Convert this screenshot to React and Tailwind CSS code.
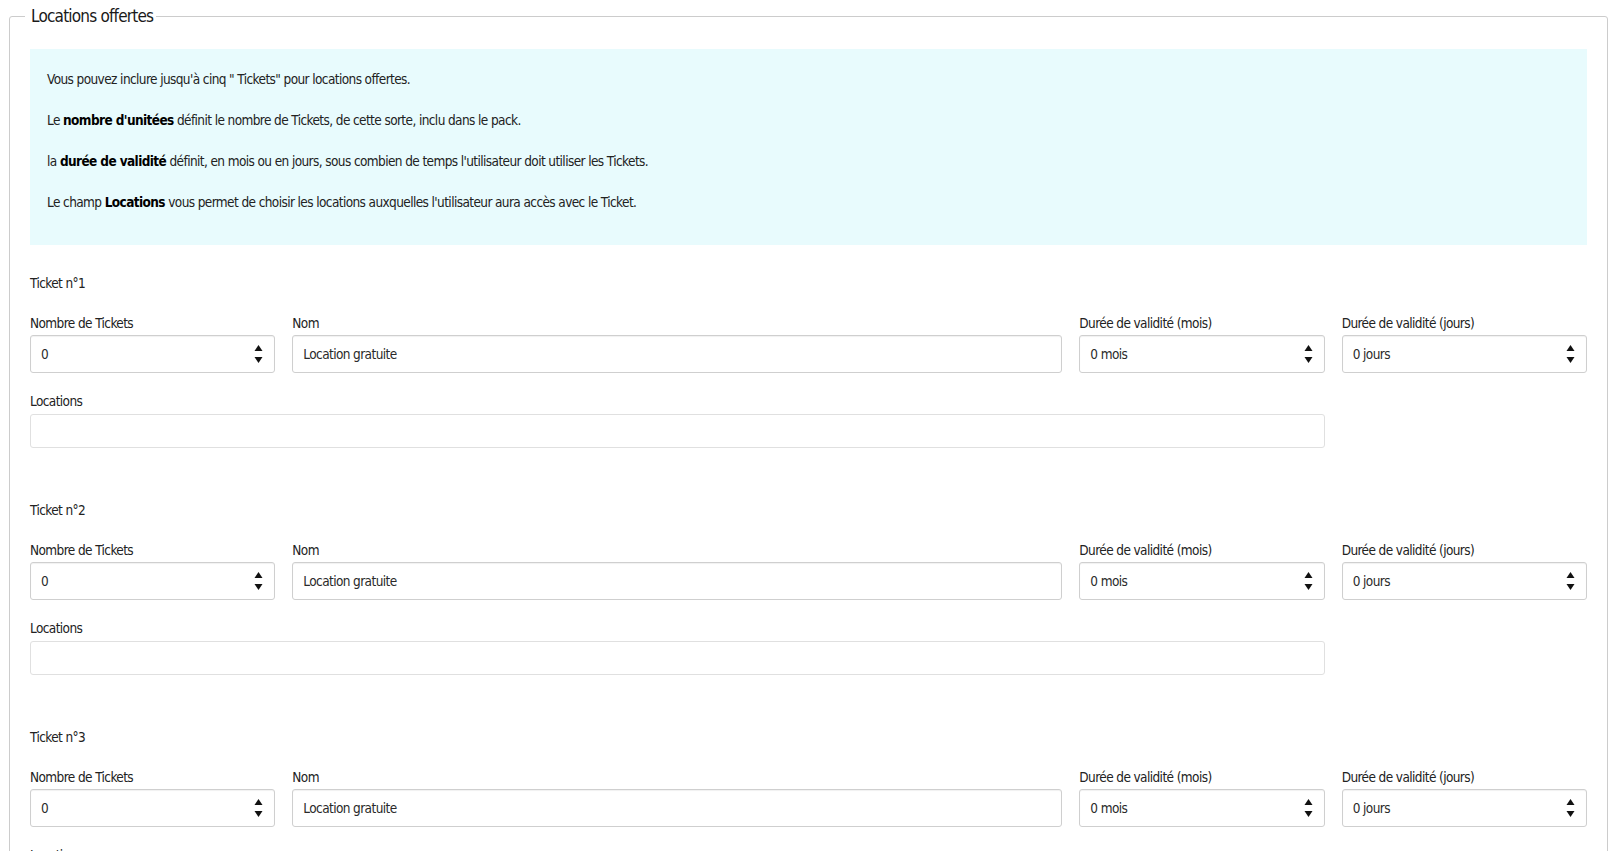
import React from 'react';

const FONT = "font-['Liberation_Sans_Narrow','DejaVu_Sans_Condensed','Roboto_Condensed','Liberation_Sans',sans-serif]";

function Spinner() {
  return (
    <svg className="w-[9px] h-[22px] shrink-0" viewBox="0 0 9 22" fill="#111">
      <path d="M4.5 2 L8.5 8 L0.5 8 Z" />
      <path d="M0.5 14 L8.5 14 L4.5 20 Z" />
    </svg>
  );
}

function Field({ label, value, spin, span }) {
  return (
    <div className={span}>
      <div className="h-5 leading-5">{label}</div>
      <div className="mt-[2px] h-[38px] border border-[#cfcfcf] rounded-[3px] bg-white shadow-[inset_0_1px_1px_rgba(0,0,0,0.06)] flex items-center pl-[10px] pr-[11px] text-[#2a2a2a]">
        <span className="flex-1 truncate">{value}</span>
        {spin && <Spinner />}
      </div>
    </div>
  );
}

function Ticket({ n }) {
  return (
    <div className="pb-[52px]">
      <div className="h-5 leading-5">Ticket n°{n}</div>
      <div className="grid grid-cols-12 gap-x-[17px] mt-5">
        <Field span="col-span-2" label="Nombre de Tickets" value="0" spin />
        <Field span="col-span-6" label="Nom" value="Location gratuite" />
        <Field span="col-span-2" label="Durée de validité (mois)" value="0 mois" spin />
        <Field span="col-span-2" label="Durée de validité (jours)" value="0 jours" spin />
        <div className="col-span-10 mt-[18px]">
          <div className="h-5 leading-5">Locations</div>
          <div className="mt-[3px] h-[34px] border border-[#e0e0e0] rounded-[3px] bg-white"></div>
        </div>
      </div>
    </div>
  );
}

export default function App() {
  return (
    <div className={`${FONT} text-[13.5px] tracking-[-0.6px] text-[#222] bg-white px-[9px] pt-[3px] overflow-hidden h-[851px]`}>
      <fieldset className="border border-[#cccccc] rounded-[3px] px-5 min-w-0">
        <legend className="-ml-[5px] pl-[6px] pr-[3px] text-[17px] leading-[26px] tracking-[-0.8px] text-[#1a1a1a]">Locations offertes</legend>
        <div className="mt-[20px] bg-[#e8fbfd] pt-5 pb-[33px] pl-[17px] space-y-[21px]">
          <p className="leading-5">Vous pouvez inclure jusqu'à cinq " Tickets" pour locations offertes.</p>
          <p className="leading-5">Le <b className="text-black">nombre d'unitées</b> définit le nombre de Tickets, de cette sorte, inclu dans le pack.</p>
          <p className="leading-5">la <b className="text-black">durée de validité</b> définit, en mois ou en jours, sous combien de temps l'utilisateur doit utiliser les Tickets.</p>
          <p className="leading-5">Le champ <b className="text-black">Locations</b> vous permet de choisir les locations auxquelles l'utilisateur aura accès avec le Ticket.</p>
        </div>
        <div className="mt-[28px]">
          <Ticket n={1} />
          <Ticket n={2} />
          <Ticket n={3} />
        </div>
      </fieldset>
    </div>
  );
}
